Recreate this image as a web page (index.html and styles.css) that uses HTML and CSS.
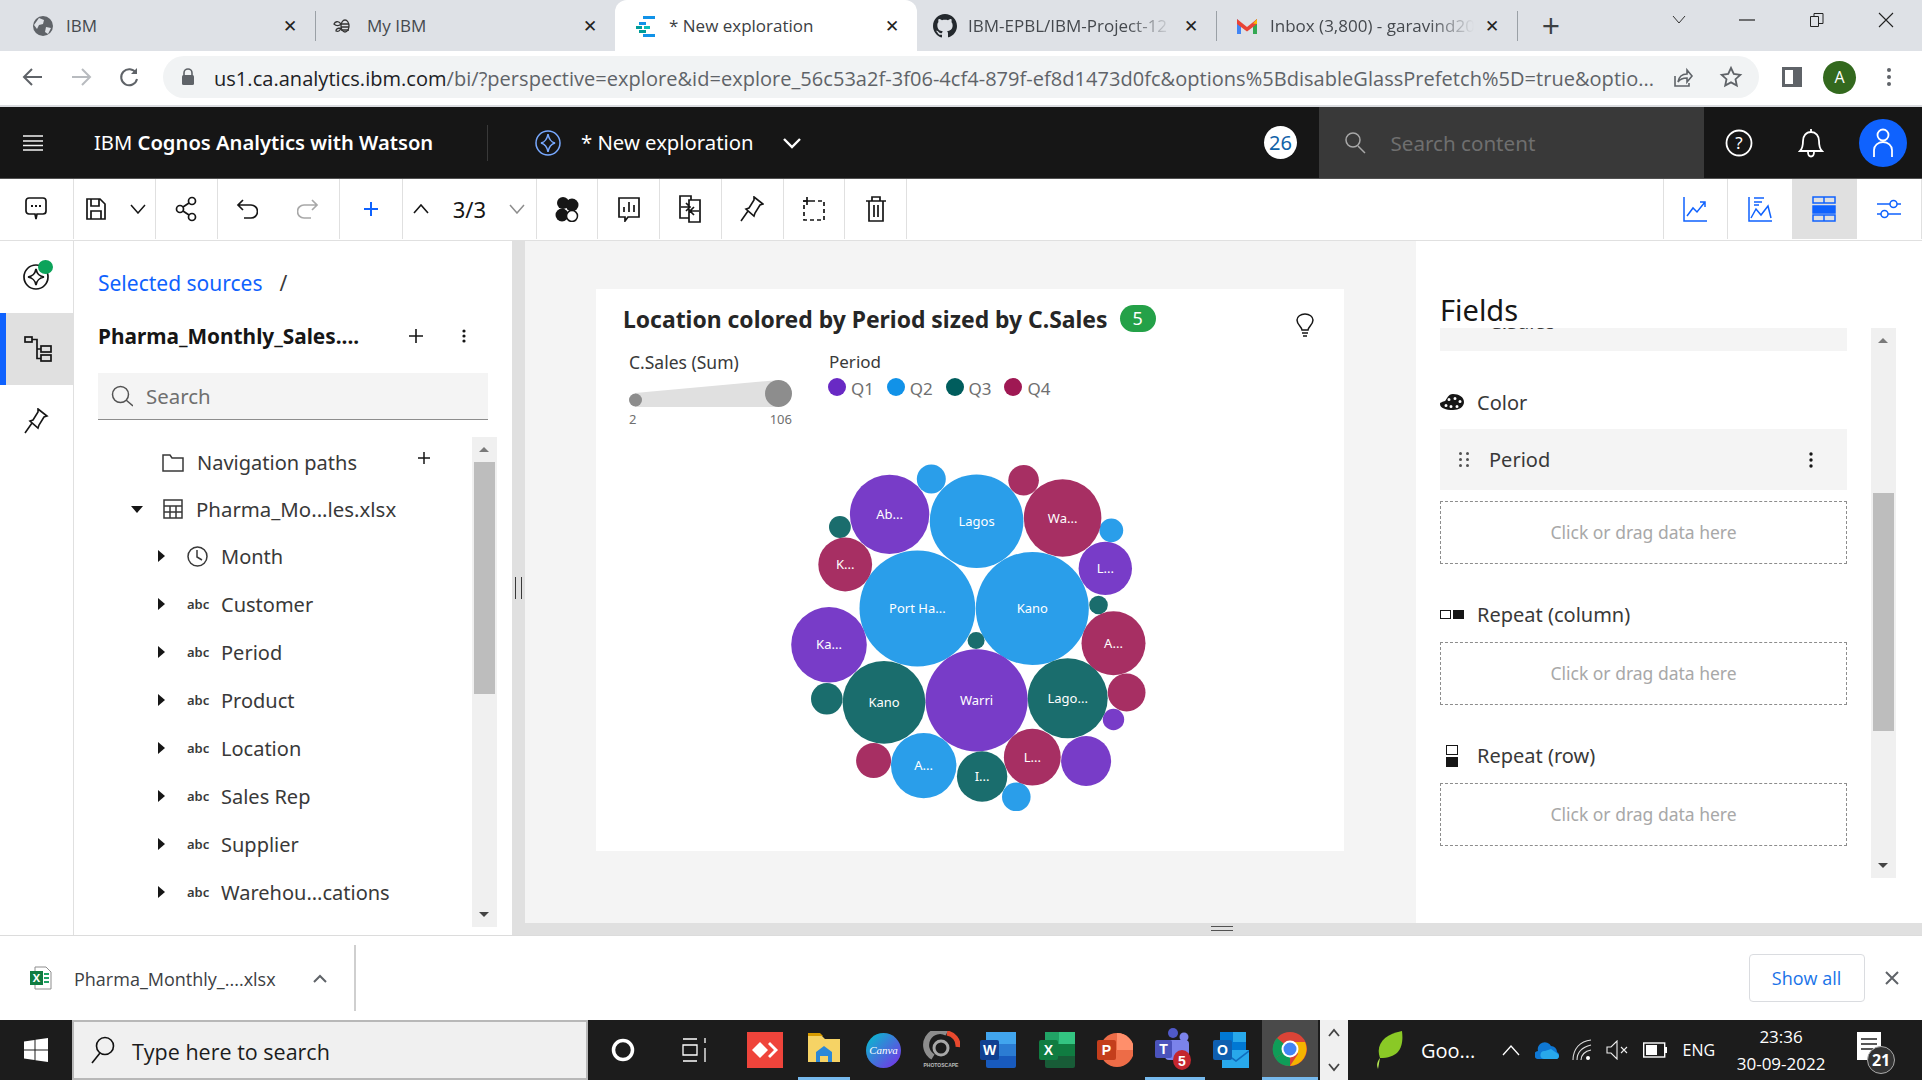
FILE: index.html
```html
<!DOCTYPE html>
<html lang="en">
<head>
<meta charset="UTF-8">
<meta name="viewport" content="width=device-width, initial-scale=1.0">
<title>New exploration</title>
<link rel="stylesheet" href="styles.css">
</head>
<body>
  <!-- browser tabs -->
  <div class="tabs">
    <div class="tab">
      <svg class="tab-icon" width="24" height="24" viewBox="0 0 24 24"><circle cx="12" cy="12" r="10" fill="#5f6368"/><path d="M8 4l5 2-1 4-4 1-2 4-3-4zM15 13l5 1-3 6-3-2z" fill="#dee1e6"/></svg>
      <span class="tab-title">IBM</span><span class="tab-close">✕</span>
    </div>
    <div class="tab-sep"></div>
    <div class="tab tab-b">
      <svg class="tab-icon" width="24" height="24" viewBox="0 0 24 24" fill="none" stroke="#333" stroke-width="1.3"><ellipse cx="13" cy="12" rx="4" ry="6"/><path d="M9 10h8M9 13h8M9 16h8M9 10C6 6 3 8 2 10c2 2 5 2 7 0zM9 14c-3 0-5 1-5 3 2 1 4 0 5-3z"/></svg>
      <span class="tab-title">My IBM</span><span class="tab-close">✕</span>
    </div>
    <div class="tab tab-active">
      <svg class="tab-icon" width="24" height="24" viewBox="0 0 24 24"><path d="M9 2h12v3H9z" fill="#1192e8"/><path d="M5 8h7v3H5z" fill="#1192e8"/><path d="M2 12h6v3H2z" fill="#009d9a"/><path d="M10 12h6v3h-6z" fill="#08bdba"/><path d="M5 16h7v3H5z" fill="#009d9a"/><path d="M9 20h12v3H9z" fill="#1192e8"/></svg>
      <span class="tab-title">* New exploration</span><span class="tab-close">✕</span>
    </div>
    <div class="tab tab-b">
      <svg class="tab-icon" width="24" height="24" viewBox="0 0 16 16"><path fill="#24292e" d="M8 0C3.6 0 0 3.6 0 8c0 3.5 2.3 6.5 5.5 7.6.4.1.5-.2.5-.4v-1.4c-2.2.5-2.7-1-2.7-1-.4-.9-.9-1.2-.9-1.2-.7-.5.1-.5.1-.5.8.1 1.2.8 1.2.8.7 1.2 1.9.9 2.3.7.1-.5.3-.9.5-1.1-1.8-.2-3.6-.9-3.6-4 0-.9.3-1.6.8-2.1-.1-.2-.4-1 .1-2.1 0 0 .7-.2 2.2.8.6-.2 1.3-.3 2-.3s1.4.1 2 .3c1.5-1 2.2-.8 2.2-.8.4 1.1.2 1.9.1 2.1.5.6.8 1.3.8 2.1 0 3.1-1.9 3.7-3.7 3.9.3.3.6.8.6 1.5v2.2c0 .2.1.5.6.4C13.7 14.5 16 11.5 16 8c0-4.4-3.6-8-8-8z"/></svg>
      <span class="tab-title tab-fade">IBM-EPBL/IBM-Project-12</span><span class="tab-close">✕</span>
    </div>
    <div class="tab-sep"></div>
    <div class="tab tab-mail">
      <svg class="tab-icon" width="24" height="24" viewBox="0 0 24 24"><path d="M2 5v15h4V10z" fill="#4285f4"/><path d="M22 5v15h-4V10z" fill="#34a853"/><path d="M2 5l10 8 10-8v5l-10 7.5L2 10z" fill="#ea4335"/><path d="M18 9.500l4-4.500v5z" fill="#fbbc04"/></svg>
      <span class="tab-title tab-fade">Inbox (3,800) - garavind20</span><span class="tab-close">✕</span>
    </div>
    <div class="tab-sep"></div>
    <div class="tab-new">+</div>
    <div class="win-btns">
      <svg width="14" height="10" viewBox="0 0 14 10" fill="none" stroke="#333"><path d="M1 1l6 7 6-7"/></svg>
      <svg width="16" height="2" viewBox="0 0 16 2"><path d="M0 1h16" stroke="#222" stroke-width="1.2"/></svg>
      <svg width="16" height="16" viewBox="0 0 16 16" fill="none" stroke="#222"><path d="M1.500 4.500h8v10h-8zM5 4.500v-3h9v10h-4"/></svg>
      <svg width="16" height="16" viewBox="0 0 16 16" stroke="#222" stroke-width="1.100"><path d="M1 1l14 14M15 1L1 15"/></svg>
    </div>
  </div>

  <!-- browser address row -->
  <div class="addr-row">
    <div class="addr-nav">
      <svg width="22" height="22" viewBox="0 0 22 22" fill="none" stroke="#5f6368" stroke-width="2"><path d="M20 11H3M10 3l-8 8 8 8"/></svg>
    </div>
    <div class="addr-nav">
      <svg width="22" height="22" viewBox="0 0 22 22" fill="none" stroke="#b8bbbf" stroke-width="2"><path d="M2 11h17M12 3l8 8-8 8"/></svg>
    </div>
    <div class="addr-nav">
      <svg width="22" height="22" viewBox="0 0 22 22" fill="none" stroke="#5f6368" stroke-width="2"><path d="M18 7a8 8 0 1 0 1 6"/><path d="M19 2v6h-6" fill="#5f6368" stroke="none"/></svg>
    </div>
    <div class="addr-pill">
      <svg class="addr-lock" width="14" height="18" viewBox="0 0 14 18"><path d="M3 8V5a4 4 0 0 1 8 0v3" fill="none" stroke="#5f6368" stroke-width="1.600"/><rect x="1" y="7" width="12" height="10" rx="1.500" fill="#5f6368"/></svg>
      <span class="addr-url"><span class="addr-host">us1.ca.analytics.ibm.com</span>/bi/?perspective=explore&amp;id=explore_56c53a2f-3f06-4cf4-879f-ef8d1473d0fc&amp;options%5BdisableGlassPrefetch%5D=true&amp;optio...</span>
      <svg class="addr-share" width="24" height="24" viewBox="0 0 24 24" fill="none" stroke="#5f6368" stroke-width="1.600"><path d="M5 11v10h14v-3M8 17c1-6 5-8 9-8V5l5 6-5 6v-4c-4 0-7 1-9 4z"/></svg>
      <svg class="addr-star" width="24" height="24" viewBox="0 0 24 24" fill="none" stroke="#5f6368" stroke-width="1.800"><path d="M12 3l2.800 6 6.500.8-4.800 4.400 1.300 6.400-5.800-3.200-5.800 3.200 1.300-6.400L2.700 9.800 9.200 9z"/></svg>
    </div>
    <svg class="addr-side" width="22" height="22" viewBox="0 0 22 22"><path fill-rule="evenodd" d="M1 1h20v20H1zM4 4v14h8V4z" fill="#5f6368"/></svg>
    <div class="addr-avatar">A</div>
    <svg class="addr-more" width="6" height="20" viewBox="0 0 6 20" fill="#5f6368"><circle cx="3" cy="3" r="2"/><circle cx="3" cy="10" r="2"/><circle cx="3" cy="17" r="2"/></svg>
  </div>

  <!-- cognos header -->
  <div class="app-header">
    <div class="hdr-menu">
      <svg width="20" height="16" viewBox="0 0 20 16" stroke="#f4f4f4" stroke-width="1.500"><path d="M0 1h20M0 6h20M0 10.500h20M0 15h20"/></svg>
    </div>
    <div class="hdr-brand">IBM <b>Cognos Analytics with Watson</b></div>
    <div class="hdr-sep"></div>
    <svg class="hdr-explore" width="26" height="28" viewBox="0 0 26 28" fill="none" stroke="#78a9ff" stroke-width="1.500"><circle cx="13" cy="14" r="12"/><path d="M13 5c1 6 3 8 7 9-4 1-6 3-7 9-1-6-3-8-7-9 4-1 6-3 7-9z"/></svg>
    <div class="hdr-name">* New exploration</div>
    <svg class="hdr-chev" width="20" height="12" viewBox="0 0 20 12" fill="none" stroke="#fff" stroke-width="2.400"><path d="M2 2l8 8 8-8"/></svg>
    <div class="hdr-count">26</div>
    <div class="hdr-search">
      <svg width="24" height="24" viewBox="0 0 24 24" fill="none" stroke="#a8a8a8" stroke-width="1.500"><circle cx="10" cy="9" r="7"/><path d="M15 15l7 7"/></svg>
      <span>Search content</span>
    </div>
    <svg class="hdr-help" width="28" height="28" viewBox="0 0 28 28" fill="none" stroke="#fff" stroke-width="1.800"><circle cx="14" cy="14" r="12.500"/><text x="14" y="20" text-anchor="middle" class="help-mark">?</text></svg>
    <svg class="hdr-bell" width="26" height="30" viewBox="0 0 26 30" fill="none" stroke="#fff" stroke-width="1.800"><path d="M2 23c3-3 3-6 3-10 0-5 3-9 8-9s8 4 8 9c0 4 0 7 3 10zM13 1v3M10 24c0 6 6 6 6 0"/></svg>
    <div class="hdr-user">
      <svg width="24" height="30" viewBox="0 0 24 30" fill="none" stroke="#fff" stroke-width="1.800"><circle cx="12" cy="7" r="5.500"/><path d="M3 29V22a9 8 0 0 1 18 0v7"/></svg>
    </div>
  </div>

  <!-- action toolbar -->
  <div class="toolbar">
    <div class="tool tool-comment">
      <svg width="24" height="26" viewBox="0 0 24 26" fill="none" stroke="#161616" stroke-width="1.700"><path d="M5 2h14a3 3 0 0 1 3 3v10a3 3 0 0 1-3 3h-6l-1 5-1-5H5a3 3 0 0 1-3-3V5a3 3 0 0 1 3-3z"/><path d="M7 10h2M11 10h2M15 10h2" stroke-width="2.200"/></svg>
    </div>
    <div class="tool tool-save">
      <svg width="20" height="24" viewBox="0 0 20 24" fill="none" stroke="#161616" stroke-width="1.700"><path d="M1 2h13l5 5v15H1zM5 2v7h8V2M5 22v-8h10v8"/></svg>
      <svg width="16" height="10" viewBox="0 0 16 10" fill="none" stroke="#161616" stroke-width="1.500"><path d="M1 1l7 8 7-8"/></svg>
    </div>
    <div class="tool tool-share">
      <svg width="22" height="26" viewBox="0 0 22 26" fill="none" stroke="#161616" stroke-width="1.700"><circle cx="5" cy="13" r="3.500"/><circle cx="17" cy="5" r="3.500"/><circle cx="17" cy="21" r="3.500"/><path d="M8 11l6-4M8 15l6 4"/></svg>
    </div>
    <div class="tool tool-undo">
      <svg width="22" height="20" viewBox="0 0 22 20" fill="none" stroke="#161616" stroke-width="1.700"><path d="M7 1L2 6l5 5M2 6h13a5 5 0 0 1 0 13H8"/></svg>
      <svg width="22" height="20" viewBox="0 0 22 20" fill="none" stroke="#a8a8a8" stroke-width="1.700"><path d="M15 1l5 5-5 5M20 6H7a5 5 0 0 0 0 13h7"/></svg>
    </div>
    <div class="tool tool-plus">
      <svg width="16" height="16" viewBox="0 0 16 16" stroke="#0f62fe" stroke-width="2"><path d="M8 1v14M1 8h14"/></svg>
    </div>
    <div class="tool tool-pager">
      <svg width="16" height="10" viewBox="0 0 16 10" fill="none" stroke="#161616" stroke-width="1.600"><path d="M1 9l7-8 7 8"/></svg>
      <span class="pager-text">3/3</span>
      <svg width="16" height="10" viewBox="0 0 16 10" fill="none" stroke="#8d8d8d" stroke-width="1.500"><path d="M1 1l7 8 7-8"/></svg>
    </div>
    <div class="tool tool-square">
      <svg width="24" height="26" viewBox="0 0 24 26"><circle cx="8" cy="7" r="6" fill="#161616"/><circle cx="17" cy="9" r="6.500" fill="#161616"/><circle cx="7" cy="19" r="6.500" fill="#161616"/><circle cx="17" cy="20" r="5.500" fill="#fff" stroke="#161616" stroke-width="1.500"/></svg>
    </div>
    <div class="tool tool-square">
      <svg width="22" height="26" viewBox="0 0 22 26" fill="none" stroke="#161616" stroke-width="1.700"><path d="M1 2h20v19h-11l-3 4v-4H1zM6 16v-5M11 16V6M16 16V9"/></svg>
    </div>
    <div class="tool tool-square">
      <svg width="22" height="28" viewBox="0 0 22 28" fill="none" stroke="#161616" stroke-width="1.700"><path d="M12 5V1H1v22h9M10 5h11v22H10zM2 12h8M7 8l4 4-4 4M20 16h-8M15 12l-4 4 4 4"/></svg>
    </div>
    <div class="tool tool-square">
      <svg width="24" height="26" viewBox="0 0 24 26" fill="none" stroke="#161616" stroke-width="1.600"><path d="M14 1l9 7-3 1-5 8-1 3-8-7 3-1 5-8zM8 15L1 25"/></svg>
    </div>
    <div class="tool tool-square">
      <svg width="22" height="24" viewBox="0 0 22 24" fill="none" stroke="#161616" stroke-width="1.700" stroke-dasharray="4 3"><path d="M1 4h20v19H1z"/><path d="M4 0v8M0 4h8" stroke-dasharray="none"/></svg>
    </div>
    <div class="tool tool-square">
      <svg width="20" height="26" viewBox="0 0 20 26" fill="none" stroke="#161616" stroke-width="1.700"><path d="M0 5h20M6 5V1h8v4M3 5v20h14V5M8 9v12M12 9v12"/></svg>
    </div>
    <div class="tool-gap"></div>
    <div class="tool tool-r">
      <svg width="24" height="26" viewBox="0 0 24 26" fill="none" stroke="#0f62fe" stroke-width="1.500"><path d="M1 1v24h23M4 20l6-8 4 4 8-10M17 6h5v5"/></svg>
    </div>
    <div class="tool tool-r">
      <svg width="24" height="26" viewBox="0 0 24 26" fill="none" stroke="#0f62fe" stroke-width="1.500"><path d="M1 1v24h23M3 22l5-9 5 6 7-9 3 12M6 2h10M6 6h8M6 9h5"/></svg>
    </div>
    <div class="tool tool-r tool-on">
      <svg width="24" height="26" viewBox="0 0 24 26" fill="none" stroke="#0f62fe" stroke-width="1.500"><rect x="1" y="1" width="22" height="6"/><rect x="1" y="10" width="22" height="7" fill="#0f62fe"/><rect x="1" y="19" width="22" height="6"/><path d="M12 1v6M12 19v6"/></svg>
    </div>
    <div class="tool tool-end">
      <svg width="24" height="26" viewBox="0 0 24 26" fill="none" stroke="#0f62fe" stroke-width="1.500"><path d="M0 8h13M20 8h4M0 18h4M11 18h13"/><circle cx="16.500" cy="8" r="3.500"/><circle cx="7.500" cy="18" r="3.500"/></svg>
    </div>
  </div>

  <div class="main">
    <!-- left icon rail -->
    <div class="rail">
      <div class="rail-item">
        <svg width="28" height="28" viewBox="0 0 28 28" fill="none" stroke="#161616" stroke-width="1.700"><circle cx="14" cy="14" r="12"/><path d="M14 6c1 5 3 7 8 8-5 1-7 3-8 8-1-5-3-7-8-8 5-1 7-3 8-8z"/></svg>
        <span class="rail-dot"></span>
      </div>
      <div class="rail-item rail-on">
        <svg width="28" height="26" viewBox="0 0 28 26" fill="none" stroke="#161616" stroke-width="1.700"><rect x="1" y="1" width="7" height="5"/><path d="M8 3.500h5v19h4M13 13h4"/><rect x="17" y="10" width="10" height="6"/><rect x="17" y="19" width="10" height="6"/></svg>
      </div>
      <div class="rail-item">
        <svg width="26" height="26" viewBox="0 0 24 26" fill="none" stroke="#161616" stroke-width="1.600"><path d="M14 1l9 7-3 1-5 8-1 3-8-7 3-1 5-8zM8 15L1 25"/></svg>
      </div>
    </div>

    <!-- source panel -->
    <div class="source">
      <div class="crumb"><span class="crumb-link">Selected sources</span><span class="crumb-slash">/</span></div>
      <div class="source-title">
        <span class="source-name">Pharma_Monthly_Sales....</span>
        <svg class="source-add" width="14" height="14" viewBox="0 0 14 14" stroke="#161616" stroke-width="1.600"><path d="M7 0v14M0 7h14"/></svg>
        <svg class="source-more" width="4" height="14" viewBox="0 0 4 14" fill="#161616"><circle cx="2" cy="2" r="1.600"/><circle cx="2" cy="7" r="1.600"/><circle cx="2" cy="12" r="1.600"/></svg>
      </div>
      <div class="source-search">
        <svg width="22" height="22" viewBox="0 0 22 22" fill="none" stroke="#525252" stroke-width="1.500"><circle cx="9.500" cy="9.500" r="8"/><path d="M15 15l7 6"/></svg>
        <span>Search</span>
      </div>
      <div class="tree-wrap">
        <div class="tree">
          <div class="row-top row-nav">
            <svg class="row-icon" width="22" height="18" viewBox="0 0 22 18" fill="none" stroke="#393939" stroke-width="1.500"><path d="M1 1h7l2 3h11v13H1z"/></svg>
            <span>Navigation paths</span>
            <svg class="row-add" width="12" height="12" viewBox="0 0 12 12" stroke="#161616" stroke-width="1.500"><path d="M6 0v12M0 6h12"/></svg>
          </div>
          <div class="row-top row-file">
            <span class="caret-down"></span>
            <svg class="row-icon" width="20" height="20" viewBox="0 0 20 20" fill="none" stroke="#393939" stroke-width="1.500"><path d="M1 1h18v18H1zM1 7h18M1 13h18M7 7v12M13 7v12"/></svg>
            <span>Pharma_Mo...les.xlsx</span>
          </div>
          <div class="row-item"><span class="caret"></span><svg class="item-icon" width="21" height="21" viewBox="0 0 21 21" fill="none" stroke="#393939" stroke-width="1.500"><circle cx="10.500" cy="10.500" r="9.500"/><path d="M10 4v7l5 3"/></svg><span>Month</span></div>
          <div class="row-item"><span class="caret"></span><span class="abc">abc</span><span>Customer</span></div>
          <div class="row-item"><span class="caret"></span><span class="abc">abc</span><span>Period</span></div>
          <div class="row-item"><span class="caret"></span><span class="abc">abc</span><span>Product</span></div>
          <div class="row-item"><span class="caret"></span><span class="abc">abc</span><span>Location</span></div>
          <div class="row-item"><span class="caret"></span><span class="abc">abc</span><span>Sales Rep</span></div>
          <div class="row-item"><span class="caret"></span><span class="abc">abc</span><span>Supplier</span></div>
          <div class="row-item"><span class="caret"></span><span class="abc">abc</span><span>Warehou...cations</span></div>
        </div>
        <div class="scroll scroll-tree"><span class="scroll-up"></span><span class="scroll-thumb thumb-tree"></span><span class="scroll-down"></span></div>
      </div>
    </div>

    <div class="work">
      <div class="work-top">
        <div class="splitter"></div>
        <div class="canvas">
          <div class="card">
            <div class="card-head">
              <span class="card-title">Location colored by Period sized by C.Sales</span>
              <span class="card-badge">5</span>
              <svg class="card-bulb" width="18" height="24" viewBox="0 0 18 24" fill="none" stroke="#161616" stroke-width="1.500"><path d="M6 17c0-3-5-5-5-10a8 6 0 0 1 16 0c0 5-5 7-5 10zM6 20h6M7 23h4"/></svg>
            </div>
            <div class="legends">
              <div class="legend-size">
                <div class="legend-label legend-sum">C.Sales (Sum)</div>
                <svg class="size-scale" width="163" height="27" viewBox="0 0 163 27"><path d="M6 13L150 0V27H6z" fill="#e0e0e0"/><circle cx="6.500" cy="20" r="6.500" fill="#8d8d8d"/><circle cx="149.500" cy="13.500" r="13.500" fill="#8d8d8d"/></svg>
                <div class="size-ends"><span>2</span><span>106</span></div>
              </div>
              <div class="legend-color">
                <div class="legend-label">Period</div>
                <div class="legend-items">
                  <span class="legend-item"><i class="dot q1"></i><span class="legend-q">Q1</span></span>
                  <span class="legend-item"><i class="dot q2"></i><span class="legend-q">Q2</span></span>
                  <span class="legend-item"><i class="dot q3"></i><span class="legend-q">Q3</span></span>
                  <span class="legend-item"><i class="dot q4"></i><span class="legend-q">Q4</span></span>
                </div>
              </div>
            </div>
            <!-- viewBox is in page coordinates, read off the reference -->
            <svg class="bubbles" width="748" height="421" viewBox="596 430 748 421">
              <g class="b-q2">
                <circle cx="931.300" cy="478.900" r="14.500"/><circle cx="976.600" cy="521.200" r="46.800"/><circle cx="1111.300" cy="530.300" r="11.900"/><circle cx="917.400" cy="608.500" r="57.900"/><circle cx="1032.300" cy="608.500" r="56.500"/><circle cx="923.700" cy="765.600" r="32.700"/><circle cx="1016.300" cy="796.800" r="14.300"/>
              </g>
              <g class="b-q1">
                <circle cx="889.600" cy="514.400" r="39.700"/><circle cx="1105.300" cy="568.400" r="26.700"/><circle cx="829" cy="644.800" r="37.800"/><circle cx="976.600" cy="700.300" r="51.100"/><circle cx="1113.500" cy="719.500" r="10.700"/><circle cx="1086.100" cy="761" r="25"/>
              </g>
              <g class="b-q3">
                <circle cx="839.900" cy="527" r="10.900"/><circle cx="1098.500" cy="605" r="9.300"/><circle cx="976.100" cy="640.500" r="8.500"/><circle cx="826.800" cy="698.800" r="15.800"/><circle cx="884" cy="702.300" r="41.400"/><circle cx="1067.700" cy="698.200" r="40"/><circle cx="982.100" cy="776.500" r="25.200"/>
              </g>
              <g class="b-q4">
                <circle cx="1023.600" cy="480.300" r="15.300"/><circle cx="1062.600" cy="518" r="38.800"/><circle cx="845.200" cy="564.500" r="26.900"/><circle cx="1113.500" cy="643.300" r="32"/><circle cx="1126.600" cy="692.500" r="18.900"/><circle cx="873.600" cy="760.600" r="17.500"/><circle cx="1032.300" cy="757.200" r="28.400"/>
              </g>
              <g class="b-text">
                <text x="889.600" y="519">Ab...</text><text x="976.600" y="526">Lagos</text><text x="1062.600" y="523">Wa...</text><text x="845.200" y="569">K...</text><text x="1105.300" y="573">L...</text><text x="917.400" y="613">Port Ha...</text><text x="1032.300" y="613">Kano</text><text x="829" y="649">Ka...</text><text x="1113.500" y="648">A...</text><text x="884" y="707">Kano</text><text x="976.600" y="705">Warri</text><text x="1067.700" y="703">Lago...</text><text x="923.700" y="770">A...</text><text x="982.100" y="781">I...</text><text x="1032.300" y="762">L...</text>
              </g>
            </svg>
          </div>
        </div>
        <div class="fields">
          <div class="fields-title">Fields</div>
          <div class="fields-body">
            <div class="fields-list">
              <div class="slot-cut"><span>C.Sales</span></div>

              <div class="slot-label">
                <svg class="slot-icon" width="24" height="16" viewBox="0 0 24 16"><path fill-rule="evenodd" fill="#161616" d="M13 0c6 0 11 3 11 8s-5 8-11 8C6 16 0 14 0 10c0-2 3-2 5-3 2-2 3-7 8-7zM9 4a1.500 1.500 0 1 0 0 3 1.500 1.500 0 0 0 0-3zm6-1a1.500 1.500 0 1 0 0 3 1.500 1.500 0 0 0 0-3zm5 3a1.500 1.500 0 1 0 0 3 1.500 1.500 0 0 0 0-3zM6 10a1.500 1.500 0 1 0 0 3 1.500 1.500 0 0 0 0-3zm5 1a1.500 1.500 0 1 0 0 3 1.500 1.500 0 0 0 0-3zm6 0a1.500 1.500 0 1 0 0 3 1.500 1.500 0 0 0 0-3z"/></svg>
                <span>Color</span>
              </div>
              <div class="slot-filled">
                <svg class="slot-grip" width="10" height="15" viewBox="0 0 10 15" fill="#525252"><circle cx="1.500" cy="1.500" r="1.500"/><circle cx="8.500" cy="1.500" r="1.500"/><circle cx="1.500" cy="7.500" r="1.500"/><circle cx="8.500" cy="7.500" r="1.500"/><circle cx="1.500" cy="13.500" r="1.500"/><circle cx="8.500" cy="13.500" r="1.500"/></svg>
                <span>Period</span>
                <svg class="slot-more" width="4" height="16" viewBox="0 0 4 16" fill="#161616"><circle cx="2" cy="2" r="1.700"/><circle cx="2" cy="8" r="1.700"/><circle cx="2" cy="14" r="1.700"/></svg>
              </div>
              <div class="slot-empty slot-first">Click or drag data here</div>

              <div class="slot-label">
                <svg class="slot-icon" width="24" height="10" viewBox="0 0 24 10"><rect x=".500" y=".500" width="10" height="8" fill="none" stroke="#161616"/><rect x="13" y="0" width="11" height="9" fill="#161616"/></svg>
                <span>Repeat (column)</span>
              </div>
              <div class="slot-empty">Click or drag data here</div>

              <div class="slot-label">
                <span class="slot-icon-box"><svg width="12" height="22" viewBox="0 0 12 22"><rect x=".500" y=".500" width="11" height="9" fill="none" stroke="#161616"/><rect x="0" y="12" width="12" height="10" fill="#161616"/></svg></span>
                <span>Repeat (row)</span>
              </div>
              <div class="slot-empty">Click or drag data here</div>
            </div>
            <div class="scroll scroll-fields"><span class="scroll-up"></span><span class="scroll-thumb thumb-fields"></span><span class="scroll-down"></span></div>
          </div>
        </div>
      </div>
      <div class="work-foot"><span class="foot-handle"></span></div>
    </div>
  </div>

  <!-- chrome download shelf -->
  <div class="shelf">
    <svg class="shelf-file" width="22" height="24" viewBox="0 0 22 24"><path d="M5 1h11l5 5v17H5z" fill="#fff" stroke="#8d8d8d"/><path d="M14 8h5M14 12h5M14 16h5" stroke="#21a366" stroke-width="2"/><rect x="0" y="5" width="13" height="14" fill="#107c41"/><text x="6.500" y="16" class="xl-mark">X</text></svg>
    <span class="shelf-name">Pharma_Monthly_....xlsx</span>
    <svg class="shelf-up" width="14" height="9" viewBox="0 0 14 9" fill="none" stroke="#5f6368" stroke-width="2"><path d="M1 8l6-6 6 6"/></svg>
    <div class="shelf-sep"></div>
    <div class="shelf-all">Show all</div>
    <svg class="shelf-x" width="14" height="14" viewBox="0 0 14 14" stroke="#5f6368" stroke-width="2"><path d="M1 1l12 12M13 1L1 13"/></svg>
  </div>

  <!-- windows taskbar -->
  <div class="taskbar">
    <div class="task-win">
      <svg width="24" height="24" viewBox="0 0 24 24" fill="#fff"><path d="M0 3.500l10.500-1.500v9.500H0zM11.500 1.800L24 0v11.500H11.500zM0 12.500h10.500V22L0 20.500zM11.500 12.500H24V24l-12.500-1.800z"/></svg>
    </div>
    <div class="task-search">
      <svg width="26" height="28" viewBox="0 0 26 28" fill="none" stroke="#111" stroke-width="1.600"><circle cx="15" cy="10" r="8.500"/><path d="M10 17L2 27"/></svg>
      <span>Type here to search</span>
    </div>
    <div class="task-cell w70"><svg width="24" height="24" viewBox="0 0 24 24" fill="none" stroke="#fff" stroke-width="3.500"><circle cx="12" cy="12" r="9.500"/></svg></div>
    <div class="task-cell w74"><svg width="26" height="24" viewBox="0 0 26 24" fill="none" stroke="#fff" stroke-width="1.300"><path d="M1 1h14M1 7h14v10H1zM1 23h14M23 0v5M23 10v14" /></svg></div>
    <div class="task-cell w66"><svg width="36" height="36" viewBox="0 0 36 36"><rect width="36" height="36" fill="#ef443b"/><path d="M13 10l8 8-8 8-8-8zM23 10l8 8-8 8-2-2 6-6-6-6z" fill="#fff"/></svg></div>
    <div class="task-cell w52 task-open"><svg width="32" height="34" viewBox="0 0 32 34"><path d="M0 4h14l3 3h15v23H0z" fill="#f6d365"/><path d="M0 1h12l3 3H0z" fill="#d79b00"/><path d="M8 20l8-6 8 6v10h-4v-6h-8v6H8z" fill="#2b88d8"/></svg></div>
    <div class="task-cell w67"><svg width="35" height="35" viewBox="0 0 35 35"><defs><linearGradient id="canvaFill" x1="0" y1="0" x2="1" y2="1"><stop offset="0" stop-color="#00c4cc"/><stop offset="1" stop-color="#7d2ae8"/></linearGradient></defs><circle cx="17.500" cy="17.500" r="17.500" fill="url(#canvaFill)"/><text x="17.500" y="21" class="canva-mark">Canva</text></svg></div>
    <div class="task-cell w49"><svg width="37" height="38" viewBox="0 0 37 38" fill="none"><path d="M10 26a13 13 0 0 1 14-24" stroke="#8d8d8d" stroke-width="6"/><path d="M24 2a13 13 0 0 1 11 14" stroke="#e8492e" stroke-width="5"/><circle cx="18" cy="17" r="7" stroke="#a8a8a8" stroke-width="3"/><text x="18" y="36" class="photo-mark">PHOTOSCAPE</text></svg></div>
    <div class="task-cell w64"><svg width="36" height="36" viewBox="0 0 36 36"><rect x="6" y="0" width="30" height="36" rx="2" fill="#185abd"/><rect x="6" y="0" width="30" height="12" fill="#41a5ee"/><rect x="6" y="12" width="30" height="12" fill="#2b7cd3"/><rect x="0" y="8" width="19" height="20" rx="2" fill="#103f91"/><text x="9.500" y="23" class="office-mark">W</text></svg></div>
    <div class="task-cell w54"><svg width="36" height="36" viewBox="0 0 36 36"><rect x="6" y="0" width="30" height="36" rx="2" fill="#185c37"/><rect x="20" y="0" width="16" height="12" fill="#33c481"/><rect x="6" y="0" width="14" height="12" fill="#21a366"/><rect x="6" y="12" width="30" height="12" fill="#107c41"/><rect x="0" y="8" width="19" height="20" rx="2" fill="#107c41"/><text x="9.500" y="23" class="office-mark">X</text></svg></div>
    <div class="task-cell w61"><svg width="36" height="36" viewBox="0 0 36 36"><circle cx="20" cy="18" r="17" fill="#ed6c47"/><path d="M20 1a17 17 0 0 1 17 17H20z" fill="#ff8f6b"/><rect x="0" y="8" width="19" height="20" rx="2" fill="#c43e1c"/><text x="9.500" y="23" class="office-mark">P</text></svg></div>
    <div class="task-cell w60 task-open task-teams"><svg width="40" height="42" viewBox="0 0 40 42"><circle cx="20" cy="5" r="5" fill="#5059c9"/><circle cx="31" cy="9" r="4.500" fill="#7b83eb"/><rect x="12" y="12" width="24" height="20" rx="4" fill="#7b83eb"/><rect x="2" y="12" width="17" height="18" rx="2" fill="#4b53bc"/><text x="10.500" y="26" class="office-mark">T</text><ellipse cx="29" cy="32" rx="9" ry="10" fill="#c4262e"/><text x="29" y="38" class="office-mark">5</text></svg></div>
    <div class="task-cell w57 task-outlook"><svg width="36" height="36" viewBox="0 0 36 36"><rect x="7" y="0" width="26" height="20" fill="#0078d4"/><rect x="20" y="0" width="13" height="10" fill="#28a8ea"/><path d="M9 18h27v18H9z" fill="#28a8ea"/><path d="M9 18l14 10 13-10v2L23 30 9 20z" fill="#0f6cbd"/><rect x="0" y="8" width="19" height="20" rx="2" fill="#0f5fb0"/><text x="9.500" y="23" class="office-mark">O</text></svg></div>
    <div class="task-cell w56 task-open task-active"><svg width="36" height="36" viewBox="0 0 36 36"><circle cx="18" cy="18" r="17" fill="#db4437"/><path d="M18 18L3 27a17 17 0 0 0 15 8z" fill="#0f9d58"/><path d="M3 27A17 17 0 0 1 5 7l13 11z" fill="#0f9d58"/><path d="M18 11h15a17 17 0 0 1-15 24l8-12z" fill="#f4b400"/><circle cx="18" cy="18" r="8.500" fill="#fff"/><circle cx="18" cy="18" r="6.500" fill="#4285f4"/></svg></div>
    <div class="task-more">
      <svg width="12" height="9" viewBox="0 0 12 9" fill="none" stroke="#444" stroke-width="1.800"><path d="M1 8l5-6 5 6"/></svg>
      <svg width="12" height="9" viewBox="0 0 12 9" fill="none" stroke="#444" stroke-width="1.800"><path d="M1 1l5 6 5-6"/></svg>
    </div>
    <svg class="tray-leaf" width="30" height="38" viewBox="0 0 30 38"><path d="M29 0c2 16-3 27-22 27C2 13 12 3 29 0z" fill="#8ac926"/><path d="M7 27l-2 11c-1-3-2-6 2-11z" fill="#b5e853"/></svg>
    <span class="tray-app">Goo...</span>
    <svg class="tray-caret" width="18" height="11" viewBox="0 0 18 11" fill="none" stroke="#fff" stroke-width="1.300"><path d="M1 10l8-9 8 9"/></svg>
    <svg class="tray-cloud" width="25" height="18" viewBox="0 0 25 18"><path d="M4 18a4 4 0 0 1-1-8 7 7 0 0 1 13-5 6 6 0 0 1 6 6 4 4 0 0 1 0 7z" fill="#0f78d4"/><path d="M9 18a4 4 0 0 1 1-8l6-2 7 5a3 3 0 0 1-1 5z" fill="#28a8ea"/></svg>
    <svg class="tray-wifi" width="20" height="22" viewBox="0 0 20 22" fill="none" stroke="#ddd" stroke-width="1.100"><path d="M1 21C1 10 8 2 19 1M5 21c0-8 6-13 14-15M9 21c0-5 4-9 10-10"/><circle cx="16" cy="19" r="2" fill="#fff" stroke="none"/></svg>
    <svg class="tray-vol" width="22" height="20" viewBox="0 0 22 20" fill="none" stroke="#eee" stroke-width="1.100"><path d="M1 7h4l6-6v18l-6-6H1zM15 7l6 6M21 7l-6 6"/></svg>
    <svg class="tray-batt" width="24" height="16" viewBox="0 0 24 16"><rect x=".700" y="1" width="21" height="14" fill="none" stroke="#fff" stroke-width="1.400"/><rect x="3" y="3" width="11" height="10" fill="#fff"/><rect x="22" y="5" width="2" height="6" fill="#fff"/></svg>
    <span class="tray-lang">ENG</span>
    <div class="tray-clock"><span>23:36</span><span>30-09-2022</span></div>
    <div class="tray-note">
      <svg width="24" height="28" viewBox="0 0 24 28"><path d="M0 0h24v28H0z" fill="#fff"/><path d="M4 7h16M4 12h16M4 17h12" stroke="#222" stroke-width="1.500"/></svg>
      <span class="note-badge">21</span>
    </div>
  </div>
</body>
</html>
```

FILE: styles.css
```css
* {
  box-sizing: border-box;
}

body {
  margin: 0;
  padding: 0;
  width: 1922px;
  height: 1092px;
  overflow: hidden;
  background: #fff;
  font-family: "Noto Sans", sans-serif;
  color: #161616;
}

svg {
  display: block;
  flex: none;
}

/* browser tabs */
.tabs {
  display: flex;
  align-items: center;
  height: 51px;
  padding-left: 15px;
  background-color: #dee1e6;
  font-family: "Open Sans", sans-serif;
  font-size: 17px;
  color: #45494e;
}

.tab {
  display: flex;
  align-items: center;
  width: 300px;
  height: 51px;
  padding: 0 17px 0 16px;
}

.tab-b {
  width: 299px;
}

.tab-mail {
  width: 300px;
  padding-left: 18px;
}

.tab-active {
  width: 302px;
  padding-left: 19px;
  background-color: #fff;
  border-radius: 12px 12px 0 0;
  color: #3c4043;
}

.tab-icon {
  margin-right: 11px;
}

.tab-title {
  flex: 1;
  overflow: hidden;
  white-space: nowrap;
}

.tab-fade {
  margin-right: 10px;
  -webkit-mask-image: linear-gradient(to right, #000 78%, transparent 100%);
  mask-image: linear-gradient(to right, #000 78%, transparent 100%);
}

.tab-close {
  width: 16px;
  font-size: 17px;
  text-align: center;
  color: #222;
}

.tab-sep {
  width: 1px;
  height: 30px;
  background-color: #9aa0a6;
}

.tab-new {
  width: 66px;
  text-align: center;
  font-size: 32px;
  font-weight: 400;
  color: #3c4043;
}

.win-btns {
  display: flex;
  align-items: center;
  justify-content: space-between;
  width: 222.500px;
  margin-left: 87.500px;
  padding-bottom: 12px;
}

/* address row */
.addr-row {
  display: flex;
  align-items: center;
  height: 56px;
  padding: 0 0 2px 9px;
  border-bottom: 2px solid #dadce0;
  background-color: #fff;
}

.addr-nav {
  display: flex;
  align-items: center;
  justify-content: center;
  width: 48px;
}

.addr-pill {
  display: flex;
  align-items: center;
  width: 1596px;
  height: 42px;
  margin-left: 10px;
  padding-left: 18px;
  border-radius: 21px;
  background-color: #f1f3f4;
}

.addr-url {
  width: 1440px;
  margin-left: 19px;
  padding-top: 2px;
  overflow: hidden;
  white-space: nowrap;
  font-family: "Open Sans", sans-serif;
  font-size: 20px;
  letter-spacing: 0.035px;
  color: #5f6368;
}

.addr-host {
  color: #202124;
}

.addr-share {
  margin-left: 16px;
}

.addr-star {
  margin-left: 25px;
}

.addr-side {
  margin-left: 22px;
}

.addr-avatar {
  width: 33px;
  height: 33px;
  margin-left: 20px;
  border-radius: 50%;
  background-color: #33691e;
  color: #fff;
  font-family: "Open Sans", sans-serif;
  font-size: 16px;
  line-height: 33px;
  text-align: center;
}

.addr-more {
  margin-left: 30px;
}

/* cognos header */
.app-header {
  display: flex;
  align-items: center;
  height: 72px;
  border-bottom: 1px solid #525252;
  background-color: #161616;
  color: #fff;
}

.hdr-menu {
  display: flex;
  justify-content: center;
  width: 66px;
}

.hdr-brand {
  width: 393px;
  margin-left: 28px;
  padding-bottom: 2px;
  font-size: 20.200px;
  white-space: nowrap;
}

.hdr-brand b {
  font-weight: 600;
}

.hdr-sep {
  width: 1px;
  height: 36px;
  background-color: #393939;
}

.hdr-explore {
  margin-left: 47px;
}

.hdr-name {
  width: 198px;
  margin-left: 20px;
  padding-bottom: 2px;
  font-size: 20.300px;
  white-space: nowrap;
}

.hdr-chev {
  margin-left: 3px;
}

.hdr-count {
  width: 33px;
  height: 33px;
  margin-left: 462px;
  border-radius: 50%;
  background-color: #fff;
  color: #0f62a8;
  font-size: 20px;
  line-height: 33px;
  text-align: center;
}

.hdr-search {
  display: flex;
  align-items: center;
  width: 385px;
  height: 71px;
  margin-left: 21.500px;
  padding-left: 24px;
  background-color: #393939;
  color: #6f6f6f;
  font-size: 20.600px;
}

.hdr-search span {
  margin-left: 24px;
}

.hdr-help {
  margin-left: 21.500px;
}

.help-mark {
  fill: #fff;
  stroke: none;
  font-size: 17px;
}

.hdr-bell {
  margin-left: 45.400px;
}

.hdr-user {
  display: flex;
  align-items: center;
  justify-content: center;
  width: 48px;
  height: 48px;
  margin-left: 34.600px;
  border-radius: 50%;
  background-color: #0f62fe;
}

/* action toolbar */
.toolbar {
  display: flex;
  height: 62px;
  padding-bottom: 1px;
  border-bottom: 1px solid #e0e0e0;
  background-color: #fff;
}

.tool {
  display: flex;
  align-items: center;
  justify-content: center;
  border-right: 1px solid #e0e0e0;
}

.tool-comment {
  width: 74px;
}

.tool-save {
  width: 82px;
  gap: 24px;
  padding-left: 3px;
}

.tool-share {
  width: 62px;
}

.tool-undo {
  width: 122px;
  gap: 39px;
  padding-right: 2px;
}

.tool-plus {
  width: 63px;
}

.tool-pager {
  width: 134px;
  gap: 16px;
  font-size: 22px;
}

.pager-text {
  width: 48px;
  text-align: center;
}

.tool-square {
  width: 61.700px;
}

.tool-gap {
  width: 757px;
  border-right: 1px solid #e0e0e0;
}

.tool-r {
  width: 64.500px;
}

.tool-on {
  background-color: #e0e0e0;
}

.tool-end {
  width: 65px;
}

/* main area */
.main {
  display: flex;
  height: 695px;
  border-bottom: 1px solid #dcdcdc;
}

.rail {
  width: 74px;
  border-right: 1px solid #e0e0e0;
}

.rail-item {
  position: relative;
  display: flex;
  align-items: center;
  justify-content: center;
  height: 72px;
  padding-right: 2px;
}

.rail-on {
  padding-right: 4px;
  border-left: 6px solid #0f62fe;
  background-color: #e0e0e0;
}

.rail-dot {
  position: absolute;
  top: 19px;
  left: 38px;
  width: 15px;
  height: 14px;
  border-radius: 50%;
  background-color: #0ca35a;
}

/* source panel */
.source {
  width: 438px;
  padding: 24px 15px 0 24px;
}

.crumb {
  height: 36px;
  font-size: 21px;
  line-height: 36px;
}

.crumb-link {
  color: #0f62fe;
}

.crumb-slash {
  margin-left: 17px;
  color: #393939;
}

.source-title {
  display: flex;
  align-items: center;
  height: 36px;
  margin-top: 17px;
  font-size: 20.800px;
  font-weight: 700;
}

.source-name {
  width: 311px;
  white-space: nowrap;
}

.source-add {
  margin-right: 39px;
}

.source-search {
  display: flex;
  align-items: center;
  width: 390px;
  height: 47px;
  margin-top: 19px;
  padding-left: 13px;
  border-bottom: 1px solid #8d8d8d;
  background-color: #f4f4f4;
  color: #6f6f6f;
  font-size: 20.400px;
}

.source-search span {
  margin-left: 13px;
}

.tree-wrap {
  display: flex;
  height: 490px;
  margin-top: 17px;
}

.tree {
  width: 374px;
  padding-top: 2px;
  font-size: 20px;
  color: #393939;
}

.row-top {
  position: relative;
  display: flex;
  align-items: center;
  height: 47px;
  white-space: nowrap;
}

.row-nav {
  padding-left: 64px;
}

.row-file {
  height: 46px;
  padding-left: 33px;
  font-size: 20.400px;
}

.row-icon {
  margin-right: 13px;
}

.row-add {
  position: absolute;
  top: 13px;
  left: 320px;
}

.caret-down {
  width: 0;
  height: 0;
  margin-right: 20px;
  border-left: 6px solid transparent;
  border-right: 6px solid transparent;
  border-top: 7px solid #161616;
}

.row-item {
  display: flex;
  align-items: center;
  height: 48.050px;
  padding-left: 60px;
  white-space: nowrap;
}

.caret {
  width: 0;
  height: 0;
  margin-right: 22px;
  border-top: 6px solid transparent;
  border-bottom: 6px solid transparent;
  border-left: 7px solid #161616;
}

.item-icon {
  margin-right: 13px;
}

.abc {
  width: 21px;
  margin-right: 13px;
  font-size: 13px;
  font-weight: 600;
  line-height: 1;
  color: #393939;
}

/* scrollbars */
.scroll {
  position: relative;
  width: 25px;
  background-color: #f0f0f0;
}

.scroll-up,
.scroll-down {
  position: absolute;
  left: 7px;
  width: 0;
  height: 0;
  border-left: 5.500px solid transparent;
  border-right: 5.500px solid transparent;
}

.scroll-up {
  top: 10px;
  border-bottom: 5px solid #7a7a7a;
}

.scroll-down {
  bottom: 10px;
  border-top: 5px solid #444;
}

.scroll-thumb {
  position: absolute;
  left: 2px;
  width: 21px;
  background-color: #bdbdbd;
}

.thumb-tree {
  top: 25px;
  height: 232px;
}

.thumb-fields {
  top: 165px;
  height: 238px;
}

/* chart area */
.work {
  flex: 1;
  display: flex;
  flex-direction: column;
}

.work-top {
  display: flex;
  height: 682px;
}

.splitter {
  position: relative;
  width: 13px;
  background-color: #e0e0e0;
}

.splitter::after {
  content: "";
  position: absolute;
  top: 336px;
  left: 3px;
  width: 5px;
  height: 22px;
  border-left: 1.500px solid #393939;
  border-right: 1.500px solid #393939;
}

.canvas {
  width: 891px;
  padding: 48px 0 0 71px;
  background-color: #f4f4f4;
}

.card {
  width: 748px;
  height: 562px;
  background-color: #fff;
}

.card-head {
  display: flex;
  align-items: center;
  height: 34px;
  margin-top: 0;
  padding: 0 30px 0 27px;
  position: relative;
  top: 13px;
}

.card-title {
  font-size: 22.900px;
  font-weight: 700;
  color: #262626;
  white-space: nowrap;
}

.card-badge {
  width: 36px;
  height: 27px;
  margin: -2px 0 0 12px;
  border-radius: 14px;
  background-color: #24a148;
  color: #fff;
  font-size: 18px;
  line-height: 27px;
  text-align: center;
}

.card-bulb {
  margin-left: auto;
  margin-top: 12px;
}

.legends {
  display: flex;
  height: 79px;
  margin-top: 28px;
  padding-left: 33px;
  font-size: 17px;
  color: #393939;
}

.legend-label {
  height: 22px;
  line-height: 22px;
  white-space: nowrap;
}

.legend-sum {
  font-size: 17.500px;
}

.size-scale {
  margin-top: 7px;
}

.size-ends {
  display: flex;
  justify-content: space-between;
  width: 163px;
  height: 16px;
  margin-top: 4px;
  font-size: 13px;
  line-height: 16px;
  color: #6f6f6f;
}

.legend-color {
  margin-left: 37px;
}

.legend-items {
  display: flex;
  margin-top: 5px;
  margin-left: -1px;
  color: #6f6f6f;
}

.legend-item {
  display: flex;
  align-items: center;
  width: 58.800px;
  height: 18px;
}

.legend-q {
  position: relative;
  top: 1px;
}

.dot {
  width: 18px;
  height: 18px;
  margin-right: 5px;
  border-radius: 50%;
}

.q1 {
  background-color: #6929c4;
}

.q2 {
  background-color: #1192e8;
}

.q3 {
  background-color: #005d5d;
}

.q4 {
  background-color: #9f1853;
}

.bubbles {
  stroke: none;
}

.b-q1 {
  fill: #783cc8;
}

.b-q2 {
  fill: #2a9eea;
}

.b-q3 {
  fill: #1a6d6d;
}

.b-q4 {
  fill: #a72f63;
}

.b-text text {
  fill: #fff;
  font-size: 13px;
  text-anchor: middle;
}

/* fields panel */
.fields {
  flex: 1;
  padding-left: 24px;
  background-color: #fff;
}

.fields-title {
  height: 87px;
  padding-top: 50px;
  font-size: 29px;
  line-height: 38px;
  color: #161616;
}

.fields-body {
  display: flex;
  height: 550px;
}

.fields-list {
  width: 407px;
  margin-right: 24px;
  font-size: 20px;
  color: #393939;
}

.slot-cut {
  height: 23px;
  overflow: hidden;
  padding-left: 49px;
  background-color: #f4f4f4;
}

.slot-cut span {
  display: block;
  margin-top: -16px;
  font-size: 20px;
  line-height: 20px;
}

.slot-label {
  display: flex;
  align-items: center;
  height: 36px;
  margin-top: 33px;
  font-size: 20px;
}

.slot-label + .slot-empty {
  margin-top: 9.600px;
}

.slot-icon {
  margin-right: 13px;
}

.slot-icon-box {
  display: flex;
  justify-content: center;
  width: 24px;
  margin-right: 13px;
}

.slot-filled {
  display: flex;
  align-items: center;
  height: 61px;
  margin-top: 9px;
  padding: 0 34px 0 19px;
  background-color: #f4f4f4;
}

.slot-grip {
  margin-right: 20px;
}

.slot-more {
  margin-left: auto;
}

.slot-empty {
  height: 62.400px;
  border: 1px dashed #8d8d8d;
  color: #a8a8a8;
  font-size: 17.500px;
  line-height: 60px;
  text-align: center;
}

.slot-first {
  margin-top: 11.400px;
}

.work-foot {
  position: relative;
  height: 12px;
  background-color: #e0e0e0;
}

.foot-handle {
  position: absolute;
  top: 3px;
  left: 699px;
  width: 22px;
  height: 5px;
  border-top: 1.500px solid #525252;
  border-bottom: 1.500px solid #525252;
}

/* download shelf */
.shelf {
  display: flex;
  align-items: center;
  height: 84px;
  padding-left: 30px;
  background-color: #fff;
  font-family: "Open Sans", sans-serif;
}

.shelf-name {
  width: 224px;
  margin-left: 22px;
  padding-top: 2px;
  font-size: 18px;
  color: #3c4043;
  white-space: nowrap;
}

.shelf-up {
  margin-left: 15px;
}

.shelf-sep {
  width: 1.500px;
  height: 66px;
  margin-left: 27px;
  background-color: #cfcfcf;
}

.shelf-all {
  width: 116px;
  height: 48px;
  margin-left: 1393px;
  border: 1px solid #dadce0;
  border-radius: 4px;
  color: #1a73e8;
  font-size: 18px;
  line-height: 46px;
  text-align: center;
}

.shelf-x {
  margin-left: 20px;
}

.xl-mark {
  fill: #fff;
  font-size: 11px;
  font-weight: 700;
  text-anchor: middle;
}

/* taskbar */
.taskbar {
  display: flex;
  align-items: center;
  height: 60px;
  background-color: #1c1c1c;
  color: #fff;
  font-family: "Open Sans", sans-serif;
}

.task-win {
  display: flex;
  justify-content: center;
  width: 72px;
}

.task-search {
  display: flex;
  align-items: center;
  width: 516px;
  height: 60px;
  padding-left: 16px;
  border: 2px solid #b8b8b8;
  background-color: #f0f0f0;
  color: #1c1c1c;
  font-size: 21.500px;
}

.task-search span {
  margin: 2px 0 0 16px;
}

.task-cell {
  position: relative;
  display: flex;
  align-items: center;
  justify-content: center;
  height: 60px;
}

.w70 { width: 70px; }
.w74 { width: 74px; }
.w66 { width: 66px; }
.w52 { width: 52px; }
.w67 { width: 67px; }
.w49 { width: 49px; }
.w64 { width: 64px; }
.w54 { width: 54px; }
.w61 { width: 61px; }
.w60 { width: 60px; }
.w57 { width: 57px; }
.w56 { width: 56px; }

.task-open {
  border-bottom: 3px solid #76b9ed;
}

.task-active {
  background-color: #4a4a4a;
}

.task-teams {
  padding-right: 4px;
}

.task-outlook {
  padding-right: 6px;
}

.canva-mark {
  fill: #fff;
  font-family: "Liberation Serif", serif;
  font-size: 11px;
  font-style: italic;
  text-anchor: middle;
}

.photo-mark {
  fill: #bdbdbd;
  font-family: "Liberation Sans", sans-serif;
  font-size: 5px;
  font-weight: 700;
  text-anchor: middle;
}

.office-mark {
  fill: #fff;
  font-family: "Liberation Sans", sans-serif;
  font-size: 14px;
  font-weight: 700;
  text-anchor: middle;
}

.task-more {
  display: flex;
  flex-direction: column;
  align-items: center;
  justify-content: center;
  gap: 26px;
  width: 28px;
  height: 60px;
  margin-left: 2px;
  background-color: #f0f0f0;
}

.tray-leaf {
  margin-left: 25px;
}

.tray-app {
  width: 60px;
  margin-left: 18px;
  font-size: 20px;
  white-space: nowrap;
}

.tray-caret {
  margin-left: 21px;
}

.tray-cloud {
  margin-left: 15px;
}

.tray-wifi {
  margin-left: 12px;
}

.tray-vol {
  margin-left: 13.500px;
}

.tray-batt {
  margin-left: 15px;
}

.tray-lang {
  margin-left: 16px;
  font-size: 16px;
}

.tray-clock {
  display: flex;
  flex-direction: column;
  align-items: center;
  gap: 5px;
  width: 100px;
  margin-left: 16px;
  font-size: 17px;
  line-height: 22px;
}

.tray-note {
  position: relative;
  margin-left: 26px;
  padding-bottom: 8px;
}

.note-badge {
  position: absolute;
  top: 14px;
  left: 10px;
  width: 28px;
  height: 28px;
  border: 1px solid #aaa;
  border-radius: 50%;
  background-color: #333;
  font-size: 16px;
  font-weight: 700;
  line-height: 26px;
  text-align: center;
}
```
